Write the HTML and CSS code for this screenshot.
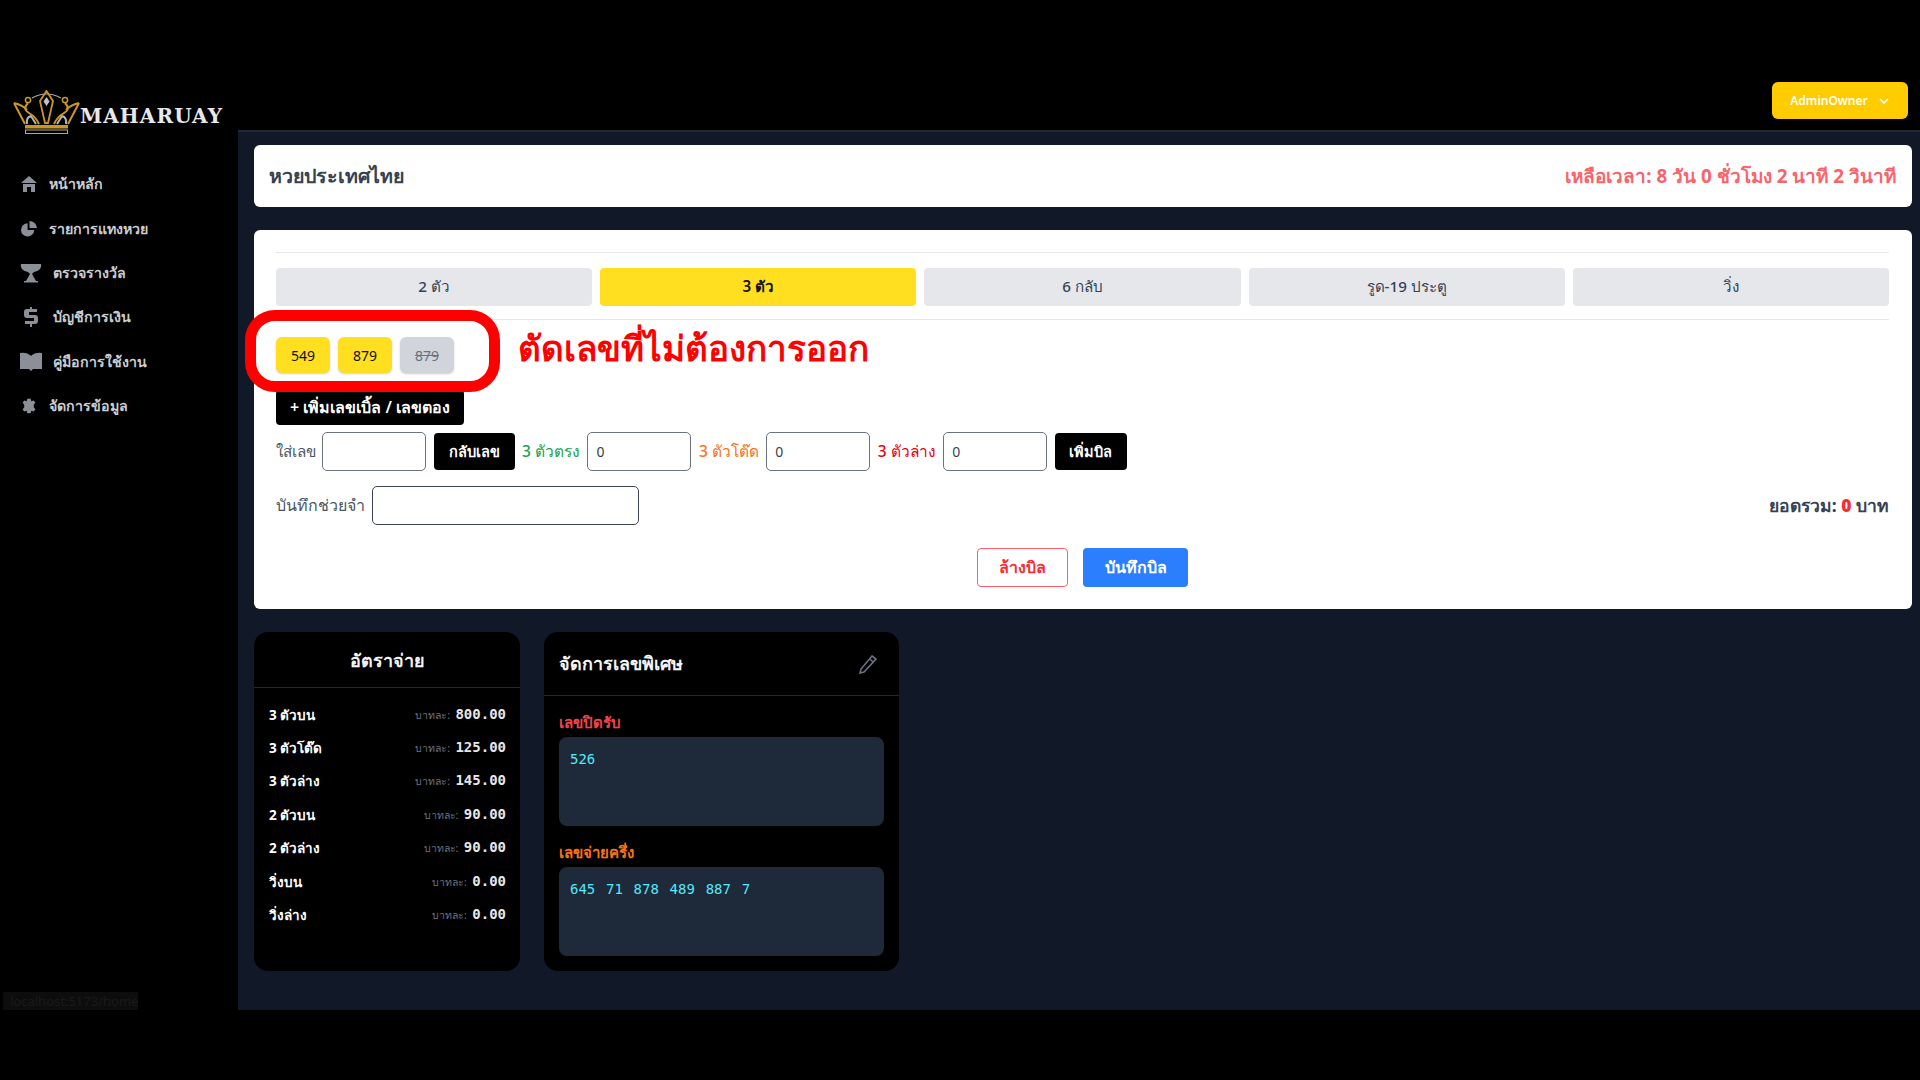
FILE: index.html
```html
<!DOCTYPE html>
<html lang="th">
<head>
    <meta charset="UTF-8">
    <meta name="viewport" content="width=device-width, initial-scale=1.0">
    <title>MAHARUAY</title>
    <link rel="stylesheet" href="styles.css">
</head>
<body>
    <div class="screen">
        <aside class="sidebar">
            <div class="logo">
                <svg class="logo-crown" width="67" height="44" viewBox="0 0 67 44" fill="none">
                    <path d="M19 8Q33.5 0 48 8" stroke="#a8a8a8" stroke-width="1.2"/>
                    <path d="M14 34Q13 27 18 26L23 34M53 34Q54 27 49 26L44 34" stroke="#b5b5b5" stroke-width="2"/>
                    <path d="M1 13 12 34M1 13Q10 15 14 20M66 13 55 34M66 13Q57 15 53 20" stroke="#c9962a" stroke-width="2"/>
                    <path d="M15 13Q9 19 16 23Q23 27 26 34M52 13Q58 19 51 23Q44 27 41 34" stroke="#c9962a" stroke-width="2"/>
                    <circle cx="15" cy="10" r="2.6" stroke="#c9962a" stroke-width="1.5"/>
                    <circle cx="52" cy="10" r="2.6" stroke="#c9962a" stroke-width="1.5"/>
                    <path d="M33.5 1 40 11 35 33H32L27 11Z" stroke="#c9962a" stroke-width="1.8"/>
                    <path d="M33.5 7 36.5 11.5 33.5 16 30.5 11.5Z" fill="#c4c4c4"/>
                    <rect x="12" y="35" width="43" height="3.5" fill="#c9962a"/>
                    <rect x="12.5" y="40" width="42" height="3.5" stroke="#a8a8a8"/>
                </svg>
                <span class="logo-text">MAHARUAY</span>
            </div>
            <nav class="menu">
                <a class="menu-item">
                    <svg class="menu-icon" viewBox="0 0 16 16"><path d="M8 0 0 7h16zM2 8h12v8H10v-5H6v5H2z"/></svg>
                    <span>หน้าหลัก</span>
                </a>
                <a class="menu-item">
                    <svg class="menu-icon" viewBox="0 0 17 17"><path d="M7 2.500a7 7 0 1 0 7 7H7z"/><path d="M9 0v7.500h8A8 8 0 0 0 9 0z"/></svg>
                    <span>รายการแทงหวย</span>
                </a>
                <a class="menu-item wide-item">
                    <svg class="menu-icon wide" viewBox="0 0 22 20"><path d="M1 1h20c1 4-2 7-7 8l-2 2 4 7h2v1.500H4V18h2l4-7-2-2C3 8 0 5 1 1z"/></svg>
                    <span>ตรวจรางวัล</span>
                </a>
                <a class="menu-item wide-item">
                    <svg class="menu-icon wide" viewBox="0 0 22 20"><path d="M10 0h2v2h5v3H9v3h6q3 0 3 3v3q0 3-3 3h-3v3h-2v-3H5v-3h9v-3H7q-3 0-3-3V5q0-3 3-3h3z"/></svg>
                    <span>บัญชีการเงิน</span>
                </a>
                <a class="menu-item wide-item">
                    <svg class="menu-icon wide" viewBox="0 0 22 20"><path d="M0 1q6-1 10 2l1 1 1-1q4-3 10-2v16h-9l-2 2-2-2H0z"/></svg>
                    <span>คู่มือการใช้งาน</span>
                </a>
                <a class="menu-item">
                    <svg class="menu-icon" viewBox="0 0 20 20"><path d="M8 1h4l1 3 3-1 2 3-2 2v4l2 2-2 3-3-1-1 3H8l-1-3-3 1-2-3 2-2V8L2 6l2-3 3 1z"/></svg>
                    <span>จัดการข้อมูล</span>
                </a>
            </nav>
            <div class="url-hint">localhost:5173/home</div>
        </aside>

        <div class="main">
            <header class="topbar">
                <button class="user-btn">AdminOwner
                    <svg width="12" height="8" viewBox="0 0 12 8" fill="none"><path d="M2 2l4 4 4-4" stroke="#fff" stroke-width="1.6"/></svg>
                </button>
            </header>

            <div class="content">
                <div class="card title-card">
                    <h1>หวยประเทศไทย</h1>
                    <div class="countdown">เหลือเวลา: 8 วัน 0 ชั่วโมง 2 นาที 2 วินาที</div>
                </div>

                <div class="card bill-card">
                    <div class="tabs">
                        <div class="tab">2 ตัว</div>
                        <div class="tab active">3 ตัว</div>
                        <div class="tab">6 กลับ</div>
                        <div class="tab">รูด-19 ประตู</div>
                        <div class="tab">วิ่ง</div>
                    </div>

                    <div class="picked">
                        <span class="chip">549</span>
                        <span class="chip">879</span>
                        <span class="chip off">879</span>
                        <div class="red-ring"></div>
                        <div class="note">ตัดเลขที่ไม่ต้องการออก</div>
                    </div>

                    <button class="btn-black add-btn">+ เพิ่มเลขเบิ้ล / เลขตอง</button>

                    <div class="entry-row">
                        <label class="lead-label">ใส่เลข</label>
                        <input class="field num" type="text">
                        <button class="btn-black flip-btn">กลับเลข</button>
                        <label class="green">3 ตัวตรง</label>
                        <input class="field amount" type="text" value="0">
                        <label class="orange">3 ตัวโต๊ด</label>
                        <input class="field amount" type="text" value="0">
                        <label class="red">3 ตัวล่าง</label>
                        <input class="field amount" type="text" value="0">
                        <button class="btn-black bill-btn">เพิ่มบิล</button>
                    </div>

                    <div class="memo-row">
                        <label>บันทึกช่วยจำ</label>
                        <input class="field memo" type="text">
                        <div class="total">ยอดรวม: <b>0</b> บาท</div>
                    </div>

                    <div class="actions">
                        <button class="btn-clear">ล้างบิล</button>
                        <button class="btn-save">บันทึกบิล</button>
                    </div>
                </div>

                <div class="panels">
                    <div class="panel rates">
                        <div class="rates-head">อัตราจ่าย</div>
                        <div class="rates-body">
                            <div class="rate"><span class="rate-name">3 ตัวบน</span><span class="rate-val"><small>บาทละ:</small> 800.00</span></div>
                            <div class="rate"><span class="rate-name">3 ตัวโต๊ด</span><span class="rate-val"><small>บาทละ:</small> 125.00</span></div>
                            <div class="rate"><span class="rate-name">3 ตัวล่าง</span><span class="rate-val"><small>บาทละ:</small> 145.00</span></div>
                            <div class="rate"><span class="rate-name">2 ตัวบน</span><span class="rate-val"><small>บาทละ:</small> 90.00</span></div>
                            <div class="rate"><span class="rate-name">2 ตัวล่าง</span><span class="rate-val"><small>บาทละ:</small> 90.00</span></div>
                            <div class="rate"><span class="rate-name">วิ่งบน</span><span class="rate-val"><small>บาทละ:</small> 0.00</span></div>
                            <div class="rate"><span class="rate-name">วิ่งล่าง</span><span class="rate-val"><small>บาทละ:</small> 0.00</span></div>
                        </div>
                    </div>

                    <div class="panel special">
                        <div class="special-head">
                            <span>จัดการเลขพิเศษ</span>
                            <svg width="20" height="20" viewBox="0 0 20 20" fill="none"><path d="M14 2l4 3L6 18l-4 1 1-4z" stroke="#6b7280" stroke-width="1.6"/><path d="M12 5l3 3" stroke="#6b7280" stroke-width="1.4"/></svg>
                        </div>
                        <div class="special-body">
                            <div class="special-label closed">เลขปิดรับ</div>
                            <div class="num-box">526</div>
                            <div class="special-label half">เลขจ่ายครึ่ง</div>
                            <div class="num-box">645 71 878 489 887 7</div>
                        </div>
                    </div>
                </div>
            </div>
        </div>
    </div>
</body>
</html>
```

FILE: styles.css
```css
* {
    margin: 0;
    padding: 0;
    box-sizing: border-box;
}

body {
    background: #000;
    font-family: "Noto Sans", "Liberation Sans", sans-serif;
    height: 1080px;
    overflow: hidden;
}

.screen {
    display: flex;
    height: 940px;
    margin-top: 70px;
    background: #111827;
}

/* sidebar */
.sidebar {
    width: 238px;
    flex-shrink: 0;
    background: #000;
    display: flex;
    flex-direction: column;
    position: relative;
}

.logo {
    display: flex;
    align-items: flex-end;
    height: 44px;
    margin: 20px 0 0 13px;
}

.logo-crown {
    flex-shrink: 0;
}

.logo-text {
    font-family: "DejaVu Serif", "Liberation Serif", serif;
    font-weight: 700;
    font-size: 20px;
    line-height: 20px;
    letter-spacing: 1.1px;
    color: #e8e8e8;
    margin-bottom: 8px;
}

.menu {
    display: flex;
    flex-direction: column;
    margin-top: 28px;
}

.menu-item {
    display: flex;
    align-items: center;
    gap: 12px;
    height: 44.4px;
    padding-left: 21px;
    font-size: 14.2px;
    font-weight: 600;
    color: #c9ccd2;
}

.menu-item.wide-item {
    gap: 11px;
    padding-left: 20px;
}

.menu-icon {
    width: 16px;
    height: 16px;
    fill: #8b8f97;
    flex-shrink: 0;
}

.menu-icon.wide {
    width: 22px;
    height: 20px;
}

.url-hint {
    position: absolute;
    left: 3px;
    bottom: 0;
    width: 135px;
    height: 18px;
    padding-left: 7px;
    background: #0d0d0d;
    color: #1a1a1a;
    font-size: 13px;
    line-height: 18px;
}

/* main area */
.main {
    flex: 1;
    min-width: 0;
    display: flex;
    flex-direction: column;
}

.topbar {
    height: 62px;
    background: #000;
    border-bottom: 2px solid #1f2937;
    display: flex;
    justify-content: flex-end;
    align-items: center;
    padding-right: 12px;
}

.user-btn {
    display: flex;
    align-items: center;
    justify-content: center;
    gap: 10px;
    width: 136px;
    height: 37px;
    margin-top: 1px;
    border: none;
    border-radius: 6px;
    background: #fc0;
    color: #fff;
    font-family: inherit;
    font-size: 12px;
    font-weight: 600;
}

.content {
    padding: 13px 8px 0 16px;
    display: flex;
    flex-direction: column;
}

.card {
    background: #fff;
    border-radius: 6px;
}

.title-card {
    height: 62px;
    display: flex;
    justify-content: space-between;
    align-items: center;
    padding: 0 16px 0 15px;
    margin-bottom: 23px;
}

.title-card h1 {
    font-size: 19.6px;
    font-weight: 700;
    color: #374151;
}

.countdown {
    font-size: 18.9px;
    font-weight: 700;
    color: #f9646c;
}

.bill-card {
    height: 379px;
    padding: 22px 23px 0 22px;
    margin-bottom: 23px;
}

.tabs {
    display: flex;
    gap: 8px;
    padding: 15px 0 13px;
    border-top: 1px solid #e5e7eb;
    border-bottom: 1px solid #e5e7eb;
}

.tab {
    flex: 1;
    height: 38px;
    border-radius: 4px;
    background: #e5e7eb;
    color: #374151;
    font-size: 15.2px;
    font-weight: 500;
    display: flex;
    align-items: center;
    justify-content: center;
}

.tab.active {
    background: #ffdf20;
    color: #111;
    font-weight: 600;
}

.picked {
    position: relative;
    display: flex;
    gap: 8px;
    margin-top: 17px;
}

.chip {
    width: 54px;
    height: 36px;
    border-radius: 6px;
    background: #ffdf20;
    color: #111;
    font-size: 14px;
    display: flex;
    align-items: center;
    justify-content: center;
    box-shadow: 0 1px 2px rgba(0,0,0,0.2);
}

.chip.off {
    background: #d1d5db;
    color: #6b7280;
    text-decoration: line-through;
}

.red-ring {
    position: absolute;
    left: -31px;
    top: -27px;
    width: 255px;
    height: 82px;
    border: 11px solid #f00;
    border-radius: 30px;
}

.note {
    position: absolute;
    left: 242px;
    top: -16px;
    font-size: 35px;
    font-weight: 700;
    color: #f00;
    white-space: nowrap;
}

.btn-black {
    background: #000;
    color: #fff;
    border: none;
    border-radius: 4px;
    font-family: inherit;
    font-size: 14.5px;
    font-weight: 600;
}

.add-btn {
    display: block;
    width: 188px;
    height: 35px;
    margin-top: 17px;
    font-size: 16px;
}

.entry-row {
    display: flex;
    align-items: center;
    gap: 7.500px;
    margin-top: 7px;
    font-size: 15.500px;
}

.entry-row label,
.memo-row label {
    color: #4b5563;
    font-weight: 500;
    white-space: nowrap;
}

.entry-row label.lead-label {
    width: 38.500px;
    font-size: 15.2px;
}

.entry-row label.green { color: #16a34a; }
.entry-row label.orange { color: #f97316; }
.entry-row label.red { color: #e7000b; }

.field {
    height: 39px;
    border: 1px solid #6b7280;
    border-radius: 5px;
    padding: 0 8px;
    font-family: inherit;
    font-size: 14px;
    color: #374151;
    background: #fff;
}

.field.num,
.field.amount {
    width: 104px;
}

.flip-btn {
    width: 81px;
    height: 37px;
}

.bill-btn {
    width: 72px;
    height: 37px;
}

.memo-row {
    display: flex;
    align-items: center;
    gap: 7px;
    margin-top: 15px;
    font-size: 16px;
}

.field.memo {
    width: 267px;
    border-color: #3f4356;
}

.total {
    margin-left: auto;
    font-size: 17.500px;
    font-weight: 700;
    color: #374151;
}

.total b {
    color: #fb2c36;
}

.actions {
    display: flex;
    justify-content: center;
    gap: 15px;
    margin-top: 23px;
}

.btn-clear,
.btn-save {
    height: 39px;
    border-radius: 4px;
    font-family: inherit;
    font-size: 16px;
    font-weight: 600;
}

.btn-clear {
    width: 91px;
    background: #fff;
    border: 1px solid #fb5f6a;
    color: #fb2c36;
}

.btn-save {
    width: 105px;
    background: #2b7fff;
    border: none;
    color: #fff;
}

/* lower panels */
.panels {
    display: flex;
    gap: 24px;
    align-items: flex-start;
}

.panel {
    background: #000;
    border-radius: 14px;
    height: 339px;
    color: #fff;
}

.rates {
    width: 266px;
}

.rates-head {
    height: 56px;
    line-height: 56px;
    text-align: center;
    font-size: 18px;
    font-weight: 600;
    border-bottom: 1px solid #1f2937;
    color: #f3f4f6;
}

.rates-body {
    padding: 10px 14px 0 15px;
}

.rate {
    display: flex;
    justify-content: space-between;
    align-items: center;
    height: 33.4px;
    font-size: 13.5px;
    font-weight: 700;
}

.rate-val {
    font-family: "DejaVu Sans Mono", "Noto Sans", monospace;
    font-size: 14px;
    font-weight: 700;
    color: #e5e7eb;
}

.rate-val small {
    font-family: "Noto Sans", sans-serif;
    font-size: 10.5px;
    font-weight: 400;
    color: #6b7280;
    margin-right: -3px;
}

.special {
    width: 355px;
}

.special-head {
    height: 64px;
    display: flex;
    justify-content: space-between;
    align-items: center;
    padding: 0 21px 0 15px;
    font-size: 18px;
    font-weight: 600;
    border-bottom: 1px solid #1f2937;
    color: #f3f4f6;
}

.special-body {
    padding: 15px 15px 0;
}

.special-label {
    font-size: 15px;
    font-weight: 600;
    height: 26px;
    line-height: 22px;
}

.special-label.closed { color: #f0444c; }
.special-label.half { color: #f97316; }

.num-box {
    height: 89px;
    border-radius: 8px;
    background: #1e2939;
    padding: 14px 11px;
    margin-bottom: 15px;
    font-family: "DejaVu Sans Mono", monospace;
    font-size: 14px;
    word-spacing: 2.3px;
    color: #53eafd;
}
```
